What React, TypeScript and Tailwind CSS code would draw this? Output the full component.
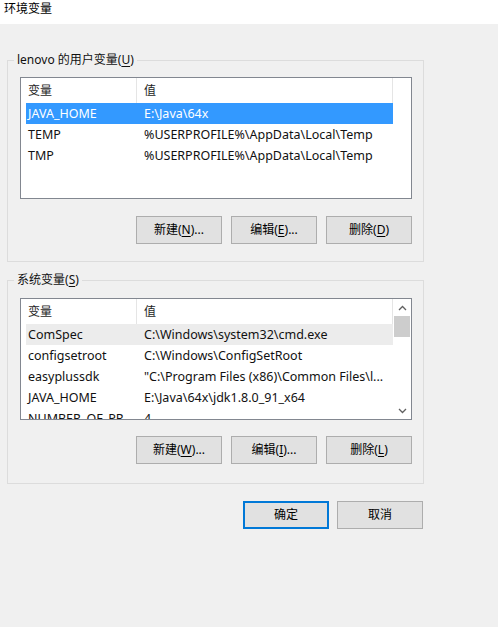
import React from 'react';

type Row = { name: string; value: string; state?: 'selected' | 'hover' };

const userVars: Row[] = [
  { name: 'JAVA_HOME', value: 'E:\\Java\\64x', state: 'selected' },
  { name: 'TEMP', value: '%USERPROFILE%\\AppData\\Local\\Temp' },
  { name: 'TMP', value: '%USERPROFILE%\\AppData\\Local\\Temp' },
];

const systemVars: Row[] = [
  { name: 'ComSpec', value: 'C:\\Windows\\system32\\cmd.exe', state: 'hover' },
  { name: 'configsetroot', value: 'C:\\Windows\\ConfigSetRoot' },
  { name: 'easyplussdk', value: '"C:\\Program Files (x86)\\Common Files\\l...' },
  { name: 'JAVA_HOME', value: 'E:\\Java\\64x\\jdk1.8.0_91_x64' },
  { name: 'NUMBER_OF_PR', value: '4' },
];

const Mnemonic: React.FC<{ pre: string; key_: string; post: string }> = ({ pre, key_, post }) => (
  <span>
    {pre}(<span className="underline underline-offset-2">{key_}</span>){post}
  </span>
);

const Button: React.FC<{ children: React.ReactNode; primary?: boolean }> = ({ children, primary }) => (
  <button
    className={`w-[86px] h-[28px] flex items-center justify-center text-[12px] text-black bg-[#e1e1e1] ${
      primary ? 'border-2 border-[#0078d7]' : 'border border-[#adadad]'
    }`}
  >
    {children}
  </button>
);

const VarList: React.FC<{ rows: Row[]; scroll?: boolean }> = ({ rows, scroll }) => (
  <div className="w-[392px] h-[122px] border border-[#828790] bg-white flex overflow-hidden text-[12.5px]">
    <div className="w-[372px] flex flex-col">
      <div className="h-[25px] flex shrink-0 text-[#1e1e1e] text-[12px]">
        <div className="w-[116px] pl-[7px] flex items-center border-r border-[#e5e5e5]">变量</div>
        <div className="flex-1 pl-[7px] flex items-center border-r border-[#e5e5e5]">值</div>
      </div>
      {rows.map((r, i) => (
        <div
          key={i}
          className={`ml-[5px] h-[21px] pt-[1px] shrink-0 flex items-center whitespace-nowrap ${
            r.state === 'selected'
              ? 'bg-[#3399ff] text-white'
              : r.state === 'hover'
              ? 'bg-[#ececec] text-[#111]'
              : 'text-[#111]'
          }`}
        >
          <div className="w-[111px] pl-[2px]">{r.name}</div>
          <div className="pl-[7px]">{r.value}</div>
        </div>
      ))}
    </div>
    <div className="w-[18px] flex flex-col">
      {scroll && (
        <>
          <div className="h-[17px] flex items-center justify-center shrink-0">
            <svg width="9" height="6" viewBox="0 0 9 6">
              <path d="M1 5 L4.5 1.5 L8 5" fill="none" stroke="#606060" strokeWidth="1.3" />
            </svg>
          </div>
          <div className="h-[21px] mx-[1px] bg-[#cdcdcd] shrink-0" />
          <div className="flex-1" />
          <div className="h-[17px] flex items-center justify-center shrink-0">
            <svg width="9" height="6" viewBox="0 0 9 6">
              <path d="M1 1 L4.5 4.5 L8 1" fill="none" stroke="#606060" strokeWidth="1.3" />
            </svg>
          </div>
        </>
      )}
    </div>
  </div>
);

const Group: React.FC<{ label: React.ReactNode; children: React.ReactNode; className?: string }> = ({
  label,
  children,
  className,
}) => (
  <div className={`relative ml-[7px] w-[417px] border border-[#dcdcdc] ${className ?? ''}`}>
    <div className="absolute left-[6px] -top-[9px] px-[3px] bg-[#f0f0f0] leading-[16px] text-[#111]">{label}</div>
    {children}
  </div>
);

export default function App() {
  return (
    <div className="w-[498px] h-[627px] bg-[#f0f0f0] text-[12px] font-['Noto_Sans','Noto_Sans_CJK_SC',sans-serif] overflow-hidden">
      <div className="h-[24px] bg-white pl-[4px] pt-[1px] leading-[16px] text-[12px] text-black">环境变量</div>

      <Group label={<Mnemonic pre="lenovo 的用户变量" key_="U" post="" />} className="mt-[36px] h-[202px] pt-[16px] pl-[12px]">
        <VarList rows={userVars} />
        <div className="mt-[17px] flex gap-[9px] pl-[116px]">
          <Button><Mnemonic pre="新建" key_="N" post="..." /></Button>
          <Button><Mnemonic pre="编辑" key_="E" post="..." /></Button>
          <Button><Mnemonic pre="删除" key_="D" post="" /></Button>
        </div>
      </Group>

      <Group label={<Mnemonic pre="系统变量" key_="S" post="" />} className="mt-[18px] h-[204px] pt-[17px] pl-[12px]">
        <VarList rows={systemVars} scroll />
        <div className="mt-[16px] flex gap-[9px] pl-[116px]">
          <Button><Mnemonic pre="新建" key_="W" post="..." /></Button>
          <Button><Mnemonic pre="编辑" key_="I" post="..." /></Button>
          <Button><Mnemonic pre="删除" key_="L" post="" /></Button>
        </div>
      </Group>

      <div className="mt-[17px] flex justify-end gap-[8px] pr-[75px]">
        <Button primary>确定</Button>
        <Button>取消</Button>
      </div>
    </div>
  );
}
